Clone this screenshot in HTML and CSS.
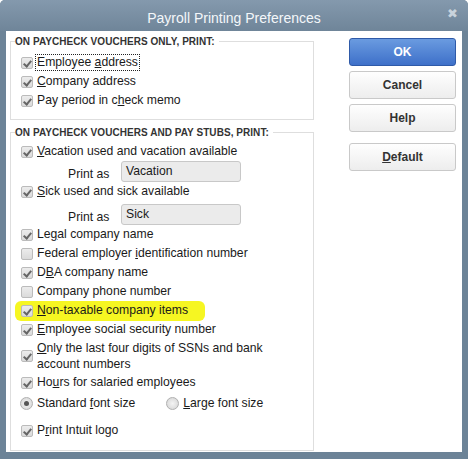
FILE: index.html
```html
<!DOCTYPE html>
<html>
<head>
<meta charset="utf-8">
<link rel="stylesheet" href="styles.css">
</head>
<body>
<div class="window">
  <div class="titlebar">
    <span class="title">Payroll Printing Preferences</span>
    <span class="close">&#x2716;</span>
  </div>
  <div class="client">
    <div class="left">
      <fieldset class="group g1">
        <legend>ON PAYCHECK VOUCHERS ONLY, PRINT:</legend>
        <div class="row"><span class="cb on"></span><span class="lbl focus">Employee <u>a</u>ddress</span></div>
        <div class="row"><span class="cb on"></span><span class="lbl"><u>C</u>ompany address</span></div>
        <div class="row"><span class="cb on"></span><span class="lbl">Pay period in c<u>h</u>eck memo</span></div>
      </fieldset>
      <fieldset class="group g2">
        <legend>ON PAYCHECK VOUCHERS AND PAY STUBS, PRINT:</legend>
        <div class="row"><span class="cb on"></span><span class="lbl"><u>V</u>acation used and vacation available</span></div>
        <div class="printas"><span class="pa">Print as</span><span class="field">Vacation</span></div>
        <div class="row"><span class="cb on"></span><span class="lbl"><u>S</u>ick used and sick available</span></div>
        <div class="printas pa2"><span class="pa">Print as</span><span class="field">Sick</span></div>
        <div class="row"><span class="cb on"></span><span class="lbl">Le<u>g</u>al company name</span></div>
        <div class="row"><span class="cb"></span><span class="lbl">Federal employer <u>i</u>dentification number</span></div>
        <div class="row"><span class="cb on"></span><span class="lbl">D<u>B</u>A company name</span></div>
        <div class="row"><span class="cb"></span><span class="lbl">Company phone number</span></div>
        <div class="row hl"><span class="cb on"></span><span class="lbl"><u>N</u>on-taxable company items</span></div>
        <div class="row"><span class="cb on"></span><span class="lbl"><u>E</u>mployee social security number</span></div>
        <div class="row two"><span class="cb on"></span><span class="lbl"><u>O</u>nly the last four digits of SSNs and bank<br>account numbers</span></div>
        <div class="row"><span class="cb on"></span><span class="lbl">Ho<u>u</u>rs for salaried employees</span></div>
        <div class="row radios">
          <span class="ropt"><span class="rb on"></span><span class="lbl">Standard <u>f</u>ont size</span></span>
          <span class="ropt r2"><span class="rb"></span><span class="lbl"><u>L</u>arge font size</span></span>
        </div>
        <div class="row last"><span class="cb on"></span><span class="lbl">P<u>r</u>int Intuit logo</span></div>
      </fieldset>
    </div>
    <div class="buttons">
      <div class="btn ok">OK</div>
      <div class="btn">Cancel</div>
      <div class="btn">Help</div>
      <div class="btn def"><u>D</u>efault</div>
    </div>
  </div>
</div>
</body>
</html>
```

FILE: styles.css
```css
* { box-sizing: border-box; }
html, body { margin: 0; padding: 0; background: #fff; }
body { width: 468px; height: 459px; overflow: hidden; font-family: "Liberation Sans", Arial, sans-serif; }

.window {
  width: 468px;
  height: 459px;
  background: #6c8397;
  border-radius: 5px 5px 0 0;
  display: flex;
  flex-direction: column;
  padding: 0 6px 7px 6px;
}

.titlebar {
  height: 31px;
  flex: none;
  position: relative;
  display: flex;
  align-items: center;
  justify-content: center;
  background: linear-gradient(#8499ad, #6f8599);
  margin: 0 -6px;
  border-radius: 5px 5px 0 0;
}
.title {
  color: #f4f7fa;
  font-size: 14px;
  padding-top: 4px;
}
.close {
  position: absolute;
  right: 10px;
  top: 6px;
  color: #c9d3dc;
  font-size: 13px;
  font-family: "DejaVu Sans", sans-serif;
}

.client {
  flex: 1;
  background: #fff;
  display: flex;
  padding: 5px 0 0 4px;
}

.left { width: 304px; display: flex; flex-direction: column; }

.group {
  margin: 0;
  border: 1px solid #dedede;
  padding: 0 0 0 9px;
  font-size: 12.2px;
  color: #1a1a1a;
}
.group legend {
  font-size: 10px;
  font-weight: bold;
  color: #333;
  padding: 0 4px 0 0;
  margin-left: -5px;
  letter-spacing: 0.05px;
}
.g1 { height: 84px; padding-top: 6px; }
.g2 { margin-top: 7px; height: 324px; padding-top: 4px; }

.row {
  display: flex;
  align-items: center;
  height: 19px;
  position: relative;
}
.lbl { margin-left: 4px; line-height: 15px; white-space: nowrap; }
.focus { outline: 1px dotted #222; outline-offset: 0; padding: 0 1px; margin-left: 3px; }

.cb {
  width: 12px; height: 12px;
  border: 1px solid #bbb;
  border-radius: 2px;
  background: linear-gradient(#ececec, #dadada);
  flex: none;
  position: relative;
  margin-left: 1px;
}
.cb.on::after {
  content: "";
  position: absolute;
  left: 3px; top: 1px;
  width: 3px; height: 6px;
  border: solid #666;
  border-width: 0 2px 2px 0;
  transform: rotate(40deg);
}

.printas {
  display: flex;
  align-items: center;
  height: 21px;
}
.pa2 { margin-top: 3px; }
.pa { margin-left: 48px; width: 53px; padding-top: 4px; }
.field {
  width: 120px; height: 21px;
  border: 1px solid #c8c8c8;
  border-radius: 3px;
  background: #ebebeb;
  padding: 2px 0 0 4px;
}

.hl::before {
  content: "";
  position: absolute;
  left: -5px; top: 0;
  width: 190px; height: 20px;
  background: #f6f622;
  border-radius: 6px;
  z-index: 0;
}
.hl > * { position: relative; z-index: 1; }

.two { height: 34px; align-items: center; }
.two .lbl { line-height: 16px; }

.radios { height: 23px; }
.ropt { display: flex; align-items: center; }
.r2 { margin-left: 31px; }
.rb {
  width: 13px; height: 13px;
  border-radius: 50%;
  border: 1px solid #b0b0b0;
  background: radial-gradient(#f4f4f4, #d2d2d2);
  flex: none;
  position: relative;
}
.rb.on::after {
  content: "";
  position: absolute;
  left: 3px; top: 3px;
  width: 5px; height: 5px;
  border-radius: 50%;
  background: #555;
}
.last { margin-top: 6px; }

.buttons {
  margin-left: 35px;
  padding-top: 2px;
  display: flex;
  flex-direction: column;
  width: 107px;
}
.btn {
  height: 28px;
  border: 1px solid #c9c9c9;
  border-radius: 3px;
  background: linear-gradient(#fefefe, #ededed);
  display: flex;
  align-items: center;
  justify-content: center;
  font-size: 12px;
  font-weight: bold;
  color: #333;
  margin-bottom: 5px;
}
.btn.ok {
  background: linear-gradient(#6a9be0, #3e70c9);
  border-color: #2f5aa8;
  color: #fff;
}
.btn.def { margin-top: 6px; }
```
